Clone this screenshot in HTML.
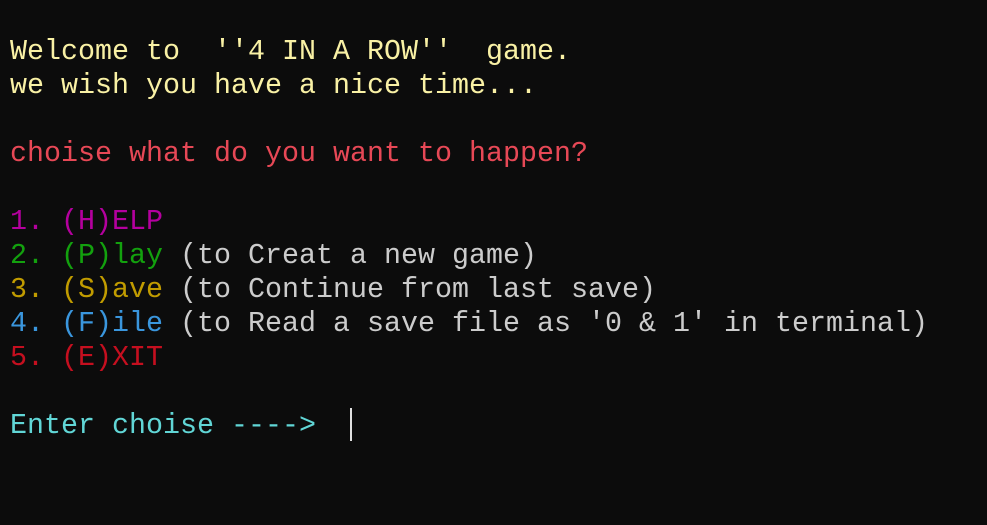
<!DOCTYPE html>
<html><head><meta charset="utf-8"><style>
html,body{margin:0;padding:0;background:#0c0c0c;width:987px;height:525px;overflow:hidden}
pre{position:absolute;left:10px;top:35px;margin:0;font-family:"Liberation Mono",monospace;font-size:28.33px;line-height:34px;color:#cccccc;white-space:pre}
.y{color:#f9f1a5}.r{color:#e74856}.p{color:#b4009e}.g{color:#13a10e}.o{color:#c19c00}.b{color:#3a96dd}.d{color:#c50f1f}.c{color:#61d6d6}
.cur{position:absolute;left:350px;top:408px;width:2px;height:33px;background:#e0e0e0}
</style></head><body>
<pre><span class="y">Welcome to  ''4 IN A ROW''  game.
we wish you have a nice time...</span>

<span class="r">choise what do you want to happen?</span>

<span class="p">1. (H)ELP</span>
<span class="g">2. (P)lay</span> (to Creat a new game)
<span class="o">3. (S)ave</span> (to Continue from last save)
<span class="b">4. (F)ile</span> (to Read a save file as '0 &amp; 1' in terminal)
<span class="d">5. (E)XIT</span>

<span class="c">Enter choise ----&gt;</span></pre>
<div class="cur"></div>
</body></html>
